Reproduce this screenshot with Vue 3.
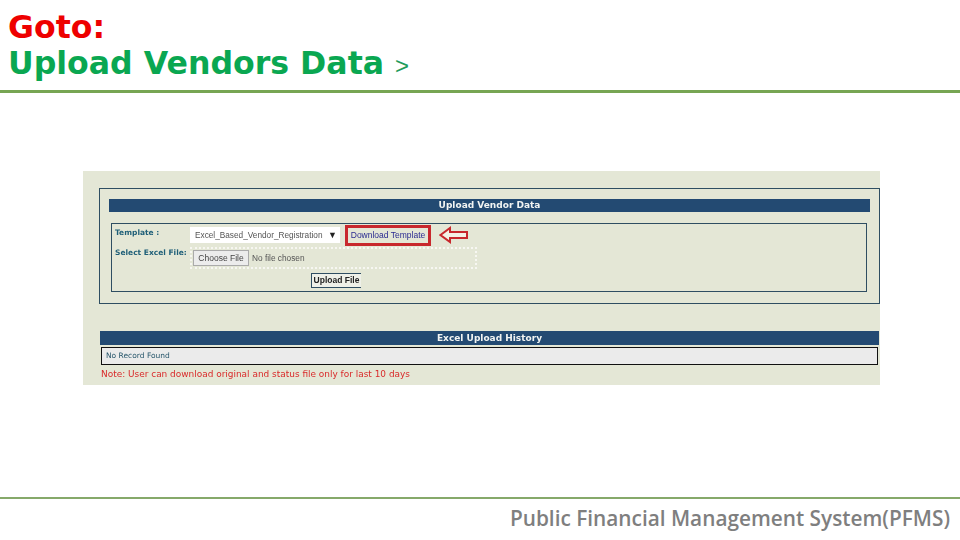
<template>
  <div class="slide">
    <header class="head">
      <div class="goto">Goto:</div>
      <div class="crumb">Upload Vendors Data <span class="gt">&gt;</span></div>
    </header>

    <main class="body">
      <section class="shot">
        <div class="outer">
          <div class="bar bar-top">Upload Vendor Data</div>
          <div class="inner">
            <div class="row row-template">
              <label class="lbl">Template :</label>
              <div class="select">
                <span>Excel_Based_Vendor_Registration</span>
                <span class="caret">▼</span>
              </div>
              <a class="download">Download Template</a>
              <svg class="arrow" width="30" height="18" viewBox="0 0 30 18">
                <path d="M1.5 9 L11 2 V6 H28 V12 H11 V16 Z" fill="#f4f1e6" stroke="#c8282d" stroke-width="2" />
              </svg>
            </div>
            <div class="row row-file">
              <label class="lbl">Select Excel File:</label>
              <div class="file-box">
                <span class="choose">Choose File</span>
                <span class="nofile">No file chosen</span>
              </div>
            </div>
            <div class="row-upload">
              <span class="upload">Upload File</span>
            </div>
          </div>
        </div>

        <div class="bar bar-history">Excel Upload History</div>
        <div class="empty">No Record Found</div>
        <div class="note">Note: User can download original and status file only for last 10 days</div>
      </section>
    </main>

    <footer class="foot">Public Financial Management System(PFMS)</footer>
  </div>
</template>

<script setup>
</script>

<style>
html,
body {
  margin: 0;
  background: #fff;
}
</style>

<style scoped>
.slide {
  width: 960px;
  height: 540px;
  display: flex;
  flex-direction: column;
  overflow: hidden;
  background: #fff;
  font-family: "DejaVu Sans", sans-serif;
}

.head {
  height: 93px;
  flex: none;
  box-sizing: border-box;
  padding: 9px 0 0 8px;
  border-bottom: 3px solid #77a553;
  font-weight: bold;
  font-size: 31.6px;
}

.goto {
  color: #ee0000;
  line-height: 36px;
  height: 36px;
}

.crumb {
  color: #0aa751;
  line-height: 36px;
  white-space: nowrap;
}

.gt {
  font-family: "Liberation Sans", sans-serif;
  font-weight: normal;
  font-size: 24px;
  color: #1f9c5c;
}

.body {
  flex: 1;
  padding: 78px 0 0 83px;
}

.shot {
  width: 797px;
  height: 214px;
  box-sizing: border-box;
  padding: 17px 0 0 16px;
  background: #e4e7d6;
  filter: blur(0.3px);
}

.outer {
  width: 781px;
  height: 116px;
  box-sizing: border-box;
  border: 1px solid #2f4e62;
  padding: 10px 9px 0 9px;
}

.bar {
  background: #234a72;
  color: #f2f4f2;
  text-align: center;
  font-weight: bold;
  font-size: 9px;
}

.bar-top {
  height: 13px;
  line-height: 13px;
}

.inner {
  width: 756px;
  height: 69px;
  box-sizing: border-box;
  margin: 11px 0 0 2px;
  border: 1px solid #2f4e62;
  padding: 3px 0 0 3px;
}

.row {
  display: flex;
}

.row-template {
  align-items: flex-start;
  height: 20px;
}

.lbl {
  width: 75px;
  flex: none;
  color: #1f5f78;
  font-weight: bold;
  font-size: 7.5px;
  line-height: 12px;
}

.select {
  width: 150px;
  height: 16px;
  box-sizing: border-box;
  padding: 0 3px 0 5px;
  background: #fff;
  display: flex;
  justify-content: space-between;
  align-items: center;
  font-family: "Liberation Sans", sans-serif;
  font-size: 8.25px;
  color: #555;
  white-space: nowrap;
}

.caret {
  color: #222;
  font-size: 9px;
}

.download {
  width: 86px;
  height: 21px;
  margin: -2px 0 0 5px;
  box-sizing: border-box;
  border: 3px solid #c8282d;
  text-align: center;
  font-family: "Liberation Sans", sans-serif;
  font-size: 8.5px;
  line-height: 15px;
  color: #2a2a90;
  white-space: nowrap;
}

.arrow {
  margin: -1px 0 0 8px;
}

.row-file {
  align-items: flex-start;
  height: 23px;
}

.file-box {
  width: 287px;
  height: 22px;
  box-sizing: border-box;
  border: 2px dotted #f7f7f2;
  display: flex;
  align-items: center;
  padding-left: 1px;
  font-family: "Liberation Sans", sans-serif;
  font-size: 8.5px;
  color: #444;
  white-space: nowrap;
}

.choose {
  width: 56px;
  height: 16px;
  line-height: 15px;
  box-sizing: border-box;
  text-align: center;
  background: #ececec;
  border: 1px solid #aaa;
  margin-right: 3px;
}

.nofile {
  color: #555;
  font-size: 8.3px;
}

.row-upload {
  display: flex;
  padding-left: 196px;
  margin-top: 3px;
}

.upload {
  width: 50px;
  height: 15px;
  box-sizing: border-box;
  border: 1px solid #2f4e62;
  border-right: 0;
  background: #eef0e8;
  text-align: center;
  font-family: "Liberation Sans", sans-serif;
  font-weight: bold;
  font-size: 8.5px;
  line-height: 13px;
  color: #222;
  white-space: nowrap;
}

.bar-history {
  width: 779px;
  height: 14px;
  line-height: 14px;
  margin: 27px 0 0 1px;
}

.empty {
  width: 777px;
  height: 18px;
  box-sizing: border-box;
  margin: 2px 0 0 2px;
  border: 1px solid #111;
  background: #ebebeb;
  padding-left: 4px;
  font-size: 7.5px;
  line-height: 16px;
  color: #27566b;
}

.note {
  margin: 3px 0 0 2px;
  font-size: 8.95px;
  line-height: 12px;
  color: #d92a2a;
  white-space: nowrap;
}

.foot {
  height: 43px;
  flex: none;
  box-sizing: border-box;
  border-top: 2px solid #86a96a;
  padding-right: 10px;
  text-align: right;
  font-family: "Open Sans", sans-serif;
  font-weight: 600;
  font-size: 20.8px;
  line-height: 38px;
  color: #7f7f7f;
  white-space: nowrap;
}
</style>
